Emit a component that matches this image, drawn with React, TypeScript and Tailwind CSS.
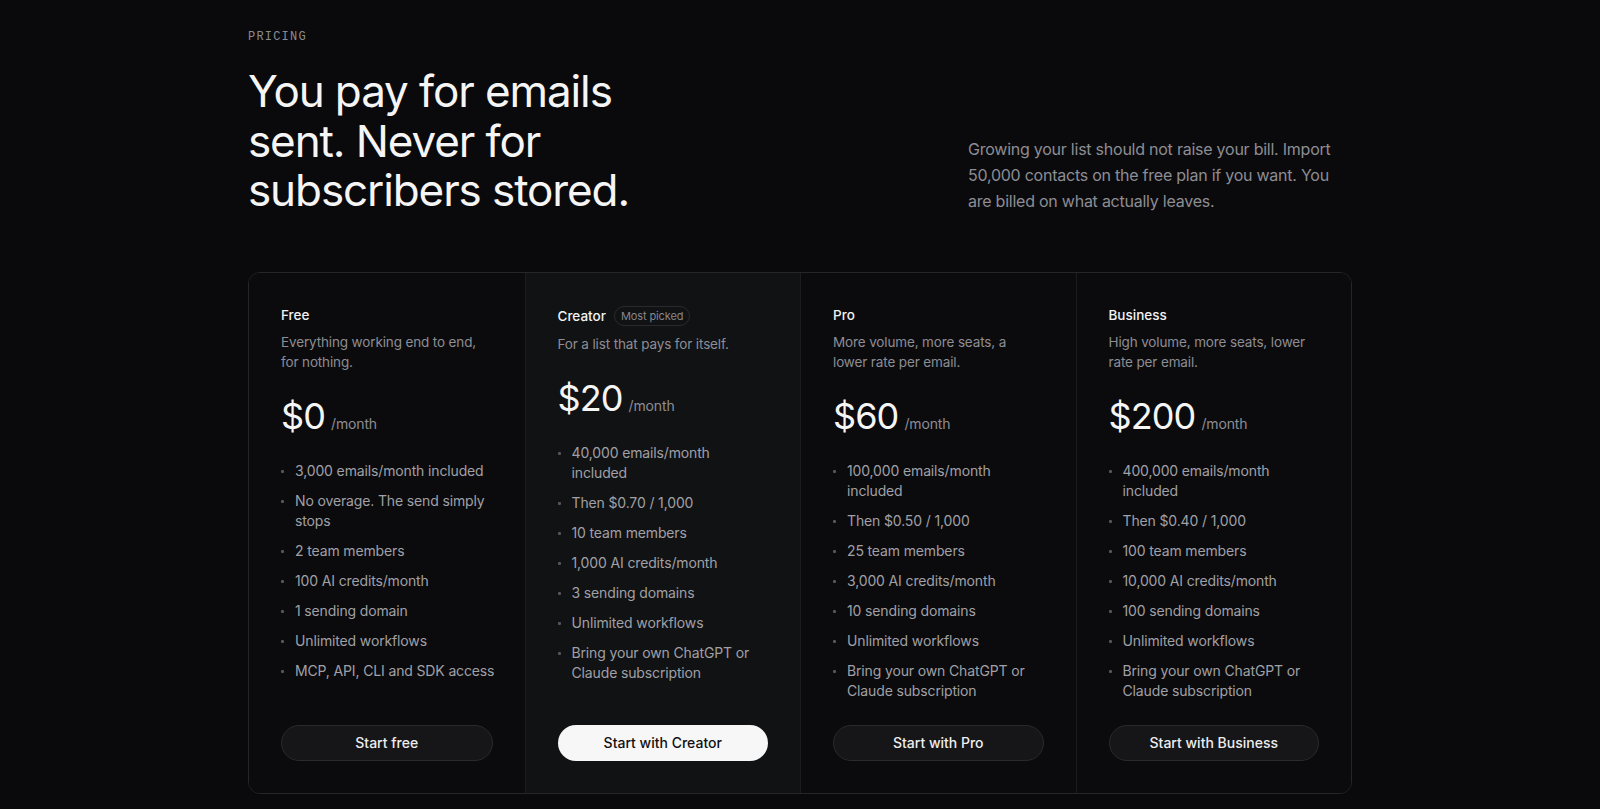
const plans = [
  {
    name: 'Free',
    desc: 'Everything working end to end, for nothing.',
    price: '$0',
    features: [
      '3,000 emails/month included',
      'No overage. The send simply stops',
      '2 team members',
      '100 AI credits/month',
      '1 sending domain',
      'Unlimited workflows',
      'MCP, API, CLI and SDK access',
    ],
    cta: 'Start free',
  },
  {
    name: 'Creator',
    badge: 'Most picked',
    desc: 'For a list that pays for itself.',
    price: '$20',
    features: [
      '40,000 emails/month included',
      'Then $0.70 / 1,000',
      '10 team members',
      '1,000 AI credits/month',
      '3 sending domains',
      'Unlimited workflows',
      'Bring your own ChatGPT or Claude subscription',
    ],
    cta: 'Start with Creator',
    featured: true,
  },
  {
    name: 'Pro',
    desc: 'More volume, more seats, a lower rate per email.',
    price: '$60',
    features: [
      '100,000 emails/month included',
      'Then $0.50 / 1,000',
      '25 team members',
      '3,000 AI credits/month',
      '10 sending domains',
      'Unlimited workflows',
      'Bring your own ChatGPT or Claude subscription',
    ],
    cta: 'Start with Pro',
  },
  {
    name: 'Business',
    desc: 'High volume, more seats, lower rate per email.',
    price: '$200',
    features: [
      '400,000 emails/month included',
      'Then $0.40 / 1,000',
      '100 team members',
      '10,000 AI credits/month',
      '100 sending domains',
      'Unlimited workflows',
      'Bring your own ChatGPT or Claude subscription',
    ],
    cta: 'Start with Business',
  },
];

// short one-liners that should never wrap
const oneLine = ['MCP, API, CLI and SDK access'];

export default function App() {
  return (
    <div className="min-h-screen bg-[#0a0a0c] font-['Inter',sans-serif] antialiased">
      <div className="mx-auto w-[1104px] pt-[29px] pb-10">
        {/* Header */}
        <p className="font-['Liberation_Mono',monospace] text-[12px] leading-4 tracking-[0.1em] text-[#8a8a90]">
          PRICING
        </p>
        <div className="mt-[22px] flex items-end justify-between">
          <h1 className="w-[400px] text-[44px] leading-[49.5px] font-normal tracking-[-0.025em] text-[#f5f5f6]">
            You pay for emails sent. Never for subscribers stored.
          </h1>
          <p className="mb-[2px] w-[384px] text-[16px] leading-[26px] tracking-[-0.015em] text-[#8d8d94]">
            Growing your list should not raise your bill. Import 50,000 contacts on the free plan if
            you want. You are billed on what actually leaves.
          </p>
        </div>

        {/* Plans */}
        <div className="mt-14 grid grid-cols-4 overflow-hidden rounded-xl border border-[#26262a]">
          {plans.map((p, i) => (
            <div
              key={p.name}
              className={
                'flex flex-col p-8 ' +
                (i > 0 ? 'border-l border-[#1c1c1f] ' : '') +
                (p.featured ? 'bg-[#111214]' : 'bg-[#0b0b0d]')
              }
            >
              <div className={'flex items-center gap-2 ' + (p.badge ? 'h-[23px]' : 'h-[21px]')}>
                <span className="text-[13.5px] font-medium text-[#f2f2f3]">{p.name}</span>
                {p.badge && (
                  <span className="flex h-5 items-center rounded-full border border-[#2a2a2e] px-[6px] text-[11px] tracking-[-0.01em] text-[#86868c]">
                    {p.badge}
                  </span>
                )}
              </div>
              <p className="mt-[6px] text-[13.5px] leading-5 tracking-[-0.01em] text-[#8d8d94]">{p.desc}</p>
              <div className="mt-6 flex items-baseline gap-[6px]">
                <span className="text-[36px] leading-10 tracking-[-0.025em] text-[#f5f5f6]">{p.price}</span>
                <span className="text-[14px] tracking-[-0.01em] text-[#8d8d94]">/month</span>
              </div>
              <ul className="mt-[25px] flex flex-1 flex-col gap-2.5">
                {p.features.map((f) => (
                  <li key={f} className="flex text-[14px] leading-5 tracking-[-0.01em] text-[#a0a0a6]">
                    <span className="mt-[9px] mr-[11px] h-[3px] w-[3px] shrink-0 rounded-[1px] bg-[#55555b]" />
                    <span className={oneLine.includes(f) ? 'whitespace-nowrap' : 'pr-[2px]'}>{f}</span>
                  </li>
                ))}
              </ul>
              <button
                className={
                  'mt-6 h-9 w-full rounded-full text-[14px] font-medium ' +
                  (p.featured
                    ? 'bg-[#f7f7f7] text-[#111113]'
                    : 'border border-[#2a2a2e] bg-[#161618] text-[#ededee]')
                }
              >
                {p.cta}
              </button>
            </div>
          ))}
        </div>
      </div>
    </div>
  );
}
